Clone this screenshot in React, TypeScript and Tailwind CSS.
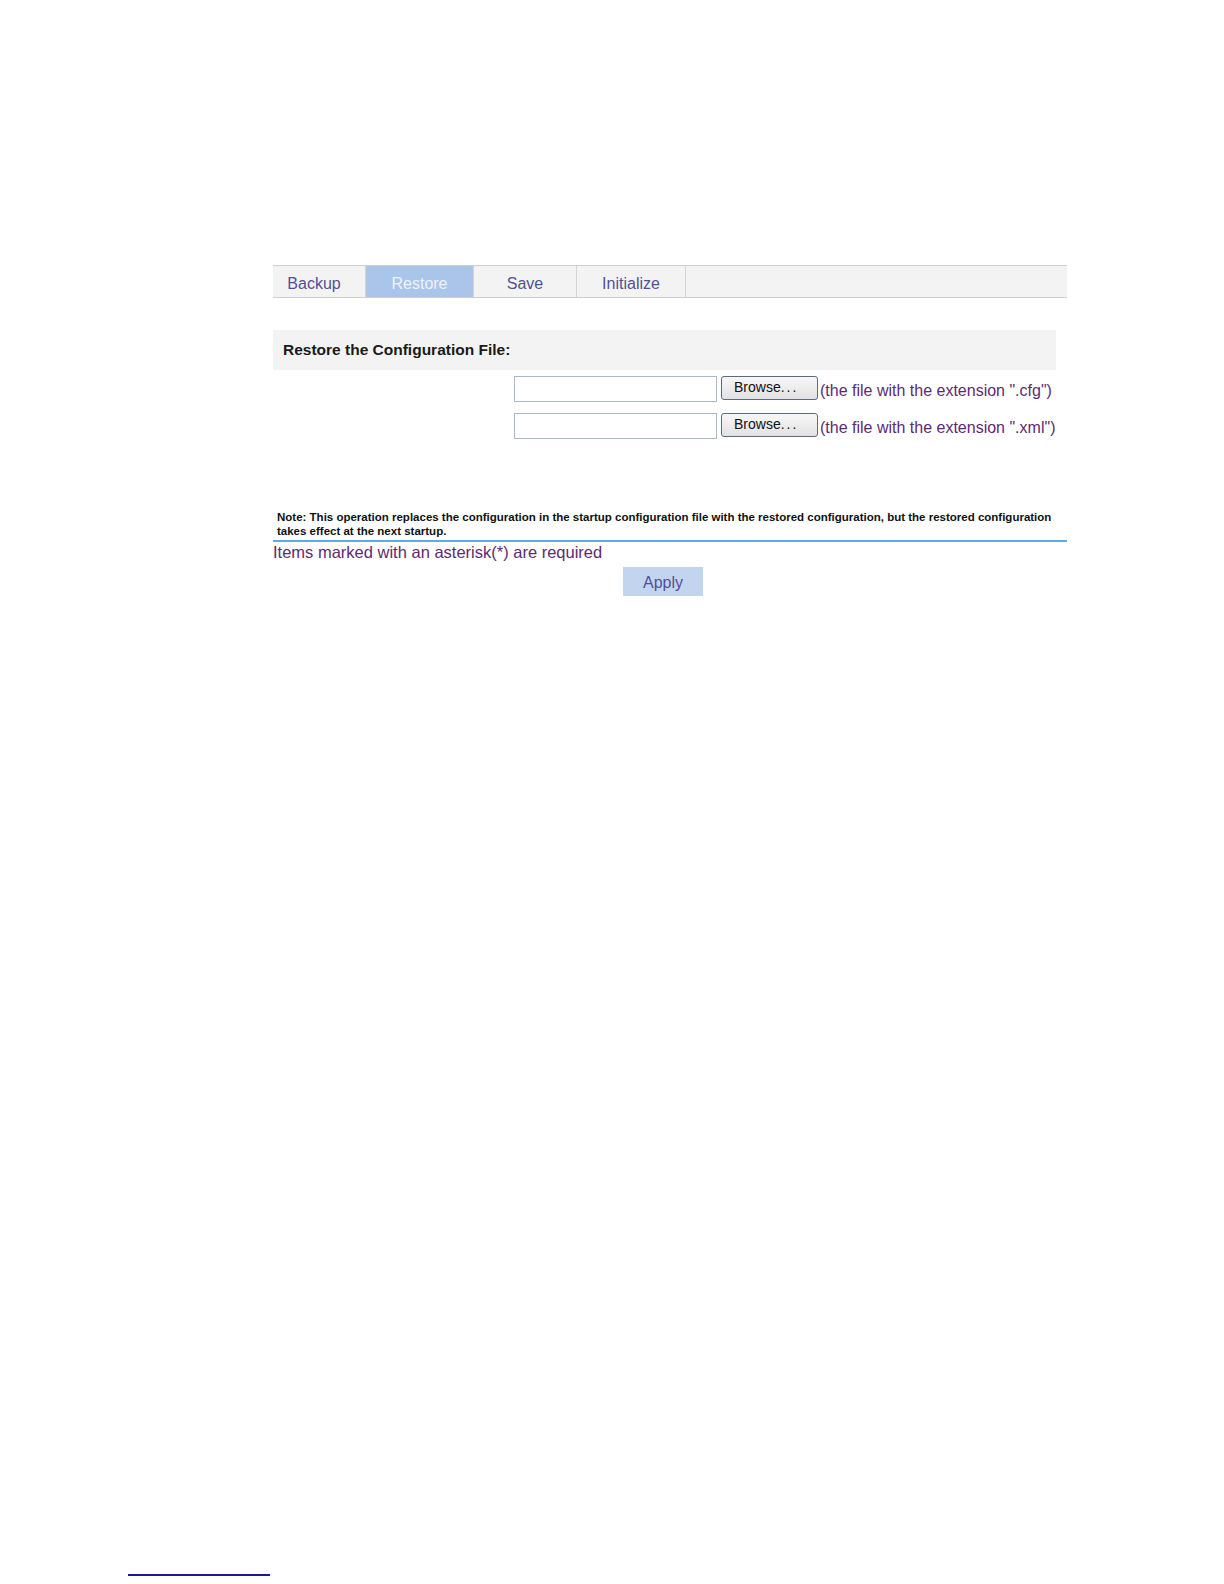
export default function App() {
  const tabs = [
    { label: 'Backup', w: 'w-[93px] pr-[10px]', active: false },
    { label: 'Restore', w: 'w-[108px]', active: true },
    { label: 'Save', w: 'w-[103px]', active: false },
    { label: 'Initialize', w: 'w-[109px]', active: false },
  ]
  const rows = ['(the file with the extension ".cfg")', '(the file with the extension ".xml")']

  return (
    <div className="relative h-[1584px] w-[1224px] bg-white font-['Liberation_Sans',Arial,sans-serif]">
      <div className="ml-[273px] w-[794px] pt-[265px]">
        {/* tabs */}
        <div className="flex h-[33px] border-y border-[#cfcfcf] bg-[#f3f3f3]">
          {tabs.map((t) => (
            <div
              key={t.label}
              className={`flex ${t.w} items-center justify-center border-r border-[#d4d4d4] pt-[5px] text-[16px] ${
                t.active ? 'bg-[#a9c5ea] text-[#eef3fb]' : 'text-[#505095]'
              }`}
            >
              {t.label}
            </div>
          ))}
        </div>

        {/* section header */}
        <div className="mt-[32px] flex h-[40px] w-[783px] items-center bg-[#f3f3f3] pl-[10px] text-[15.5px] font-bold text-[#1a1a1a]">
          Restore the Configuration File:
        </div>

        {/* file rows */}
        <div className="mt-[6px] flex flex-col gap-[11px] pl-[241px]">
          {rows.map((r) => (
            <div key={r} className="flex h-[26px] items-start">
              <div className="h-[26px] w-[203px] border border-[#a9b8cc] bg-white" />
              <button className="ml-[4px] h-[24px] w-[97px] rounded-[3px] border border-[#5a6b80] bg-gradient-to-b from-[#f7f7f7] to-[#e2e2e2] pb-[2px] pl-[12px] text-left text-[14px] leading-none text-[#111]">
                Browse<span className="tracking-[2px]">...</span>
              </button>
              <span className="ml-[2px] mt-[5px] text-[16px] leading-[20px] text-[#5e2a73]">{r}</span>
            </div>
          ))}
        </div>

        {/* note */}
        <div className="mt-[71px] border-b-2 border-[#5aacec] pb-[2px] pl-[4px] text-[11.5px] font-bold leading-[14px] text-[#111]">
          Note: This operation replaces the configuration in the startup configuration file with the restored configuration, but the restored configuration takes effect at the next startup.
        </div>
        <div className="text-[16.5px] leading-[20px] text-[#5e2a73]">Items marked with an asterisk(*) are required</div>
        <div className="flex pl-[350px] pt-[5px]">
          <button className="h-[29px] w-[80px] bg-[#c3d4ef] pt-[2px] text-[16px] text-[#505095]">Apply</button>
        </div>
      </div>

      <div className="absolute left-[128px] top-[1574px] h-[2px] w-[142px] bg-[#1a1a8a]" />
    </div>
  )
}
